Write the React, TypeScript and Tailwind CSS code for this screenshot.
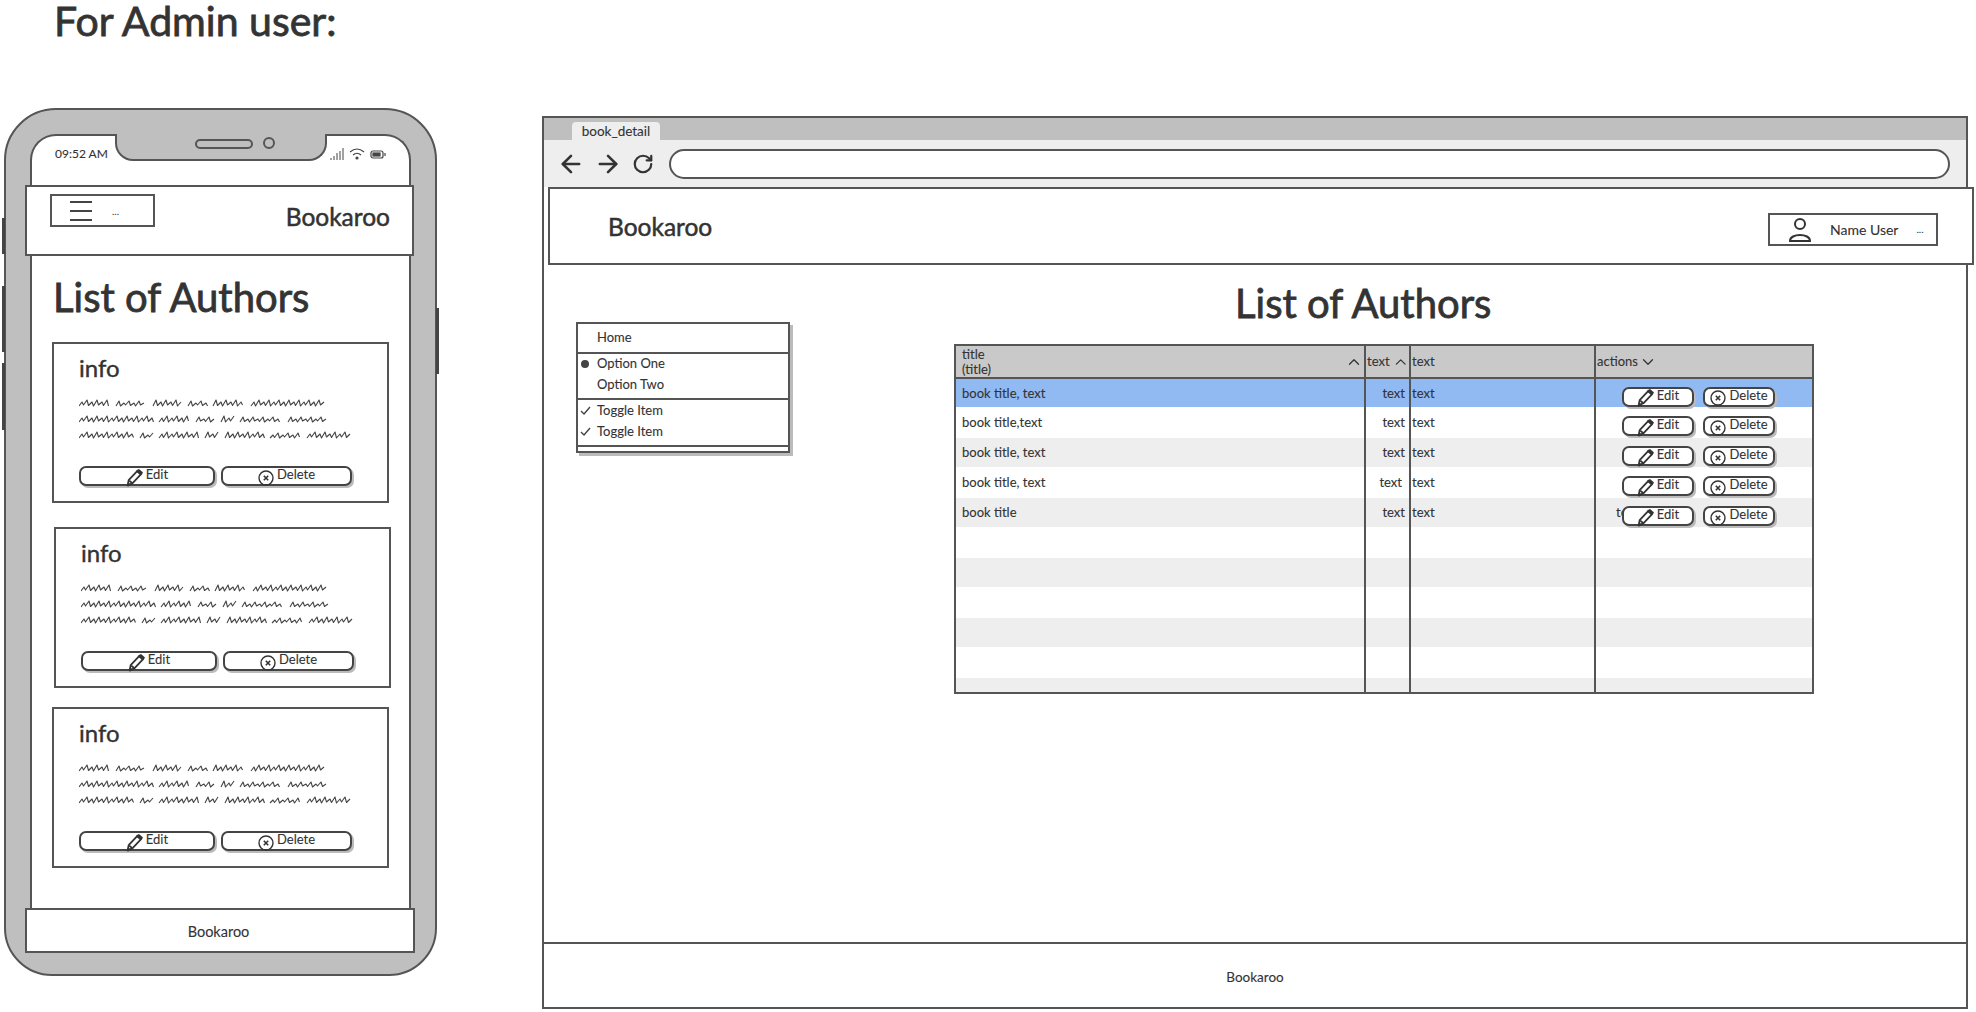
import { ArrowLeft, ArrowRight, ChevronDown, ChevronUp, RotateCw } from "lucide-react";

const scribbleLines = [
  [[0, 31], [37, 66], [74, 103], [109, 130], [134, 164], [172, 245]],
  [[0, 75], [80, 111], [117, 136], [142, 155], [161, 202], [209, 248]],
  [[0, 56], [61, 74], [80, 120], [126, 139], [146, 186], [191, 222], [228, 270]],
];

// the wavy "lorem ipsum" scribble the wireframe uses for body copy
function Scribble() {
  const paths = scribbleLines.map((words, i) =>
    words
      .map(([from, to]) => {
        const base = 10 + i * 16;
        let d = `M${from} ${base}`;
        let n = 0;
        for (let x = from + 2; x <= to; x += 2.5) {
          n++;
          const peak = 3 + ((n * 5 + from) % 4);
          const y = n % 2 === 1 ? base - peak : base - ((n + from) % 3) * 0.5;
          d += ` L${x + (n % 2 === 1 ? 1 : 0)} ${y}`;
        }
        return d;
      })
      .join(" ")
  );
  return (
    <svg width="272" height="46" viewBox="0 0 272 46" fill="none" stroke="#444" strokeWidth="1.1" strokeLinejoin="round">
      {paths.map((d, i) => (
        <path key={i} d={d} />
      ))}
    </svg>
  );
}

function PencilIcon() {
  return (
    <svg className="mt-[3px] shrink-0" width="17" height="18" viewBox="0 0 16 17" fill="none" stroke="#333" strokeWidth="1.7" strokeLinejoin="round">
      <path d="M1.5 15.5 L2.5 10.5 L10.5 2 L14 5 L6 13.5 Z" />
      <path d="M10.5 2 L12 1 L15 3.5 L14 5 L10.5 2 Z" fill="#333" />
      <path d="M3 11 L6 13.5" />
      <path d="M1.5 15.5 L4 14.5" strokeWidth="2" />
    </svg>
  );
}

function DeleteIcon() {
  return (
    <svg className="mt-[3px] shrink-0" width="16" height="16" viewBox="0 0 16 16" fill="none" stroke="#333" strokeWidth="1.4">
      <circle cx="8" cy="8" r="7" />
      <path d="M5.8 5.8 L10.2 10.2 M10.2 5.8 L5.8 10.2" strokeWidth="1.6" />
    </svg>
  );
}

function StatusIcons() {
  return (
    <div className="flex items-center gap-[5px] pt-[12px] pl-[3px]">
      <svg width="14" height="12" viewBox="0 0 14 12" stroke="#444" strokeWidth="1">
        <path d="M1 12V10 M4 12V8 M7 12V5 M10 12V3 M13 12V0" />
      </svg>
      <svg width="16" height="12" viewBox="0 0 16 12" fill="none" stroke="#444" strokeWidth="1.2">
        <path d="M1 4 Q8 -2 15 4" />
        <path d="M4 7 Q8 3.5 12 7" />
        <circle cx="8" cy="10" r="1" fill="#444" />
      </svg>
      <svg width="16" height="9" viewBox="0 0 16 9" fill="none" stroke="#444" strokeWidth="1.2">
        <rect x="1" y="1" width="12" height="7" rx="2" />
        <rect x="3" y="3" width="7" height="3" fill="#444" />
        <path d="M15 3V6" />
      </svg>
    </div>
  );
}

function ActionButtons({ className }: { className: string }) {
  return (
    <div className={className}>
      <button className="relative flex h-[20px] w-[72px] items-center justify-center gap-[3px] rounded-[7px] border-2 border-[#444] bg-white text-[13px] leading-none text-[#333] shadow-[2px_2px_0_#bbb]">
        <PencilIcon />
        <span className="-mt-[3px]">Edit</span>
      </button>
      <button className="relative flex h-[20px] w-[72px] items-center justify-center gap-[3px] rounded-[7px] border-2 border-[#444] bg-white text-[13px] leading-none text-[#333] shadow-[2px_2px_0_#bbb]">
        <DeleteIcon />
        <span className="-mt-[3px]">Delete</span>
      </button>
    </div>
  );
}

const cards = [
  { outer: "ml-[20px] h-[161px]" },
  { outer: "ml-[22px] mt-[24px] h-[161px]" },
  { outer: "ml-[20px] mt-[19px] h-[161px]" },
];

function AuthorCard({ outer }: { outer: string }) {
  return (
    <div className={`w-[337px] border-2 border-[#555] pl-[25px] ${outer}`}>
      <div className="pt-[8px] text-[24px] leading-[32px] text-[#333] [-webkit-text-stroke:0.4px_#333]">info</div>
      <div className="mt-[12px] h-[46px]">
        <Scribble />
      </div>
      <div className="mt-[24px] flex gap-[6px]">
        <button className="flex h-[20px] w-[136px] items-center justify-center gap-[3px] rounded-[7px] border-2 border-[#444] bg-white text-[13px] leading-none text-[#333] shadow-[2px_2px_0_#bbb]">
          <PencilIcon />
          <span className="-mt-[3px]">Edit</span>
        </button>
        <button className="flex h-[20px] w-[131px] items-center justify-center gap-[3px] rounded-[7px] border-2 border-[#444] bg-white text-[13px] leading-none text-[#333] shadow-[2px_2px_0_#bbb]">
          <DeleteIcon />
          <span className="-mt-[3px]">Delete</span>
        </button>
      </div>
    </div>
  );
}

function Phone() {
  return (
    <div className="relative flex h-[868px] w-[433px] shrink-0 flex-col rounded-t-[52px] rounded-b-[48px] border-2 border-[#555] bg-[#bfbfbf] px-[24px] pt-[24px] pb-[21px]">
      <div className="absolute -left-[4px] top-[108px] h-[36px] w-[3px] bg-[#444]" />
      <div className="absolute -left-[4px] top-[176px] h-[66px] w-[3px] bg-[#444]" />
      <div className="absolute -left-[4px] top-[253px] h-[67px] w-[3px] bg-[#444]" />
      <div className="absolute -right-[4px] top-[198px] h-[66px] w-[3px] bg-[#444]" />

      <div className="flex flex-1 flex-col rounded-t-[26px] border-x-2 border-t-2 border-[#555] bg-white">
        <div className="flex h-[49px] items-start">
          <div className="w-[83px] pt-[9px] pl-[23px] text-[12px] leading-[18px] text-[#333]">09:52&nbsp;AM</div>
          <div className="-mt-[2px] flex h-[27px] w-[212px] items-center justify-center gap-[10px] rounded-b-[18px] border-x-2 border-b-2 border-[#555] bg-[#bfbfbf] pb-[6px] pl-[28px]">
            <div className="h-[10px] w-[58px] rounded-full border-2 border-[#555]" />
            <div className="-mt-[2px] h-[12px] w-[12px] rounded-full border-2 border-[#555]" />
          </div>
          <StatusIcons />
        </div>

        <div className="-ml-[7px] -mr-[5px] flex h-[71px] justify-between border-2 border-[#555] bg-white pl-[23px] pr-[22px]">
          <div className="mt-[7px] flex h-[33px] w-[105px] border-2 border-[#555]">
            <div className="mt-[5px] ml-[18px] flex h-[20px] w-[22px] flex-col justify-between">
              <div className="h-[2px] bg-[#444]" />
              <div className="h-[2px] bg-[#444]" />
              <div className="h-[2px] bg-[#444]" />
            </div>
            <div className="mt-[8px] ml-[20px] text-[10px] leading-[14px] text-[#444]">...</div>
          </div>
          <div className="mt-[12px] text-[24.5px] leading-[36px] text-[#333] [-webkit-text-stroke:0.5px_#333]">Bookaroo</div>
        </div>

        <h1 className="mt-[16px] ml-[21px] text-[40px] leading-[50px] text-[#333] [-webkit-text-stroke:0.8px_#333]">List of Authors</h1>

        <div className="mt-[20px] flex flex-col">
          {cards.map((card, i) => (
            <AuthorCard key={i} outer={card.outer} />
          ))}
        </div>

        <div className="-ml-[7px] -mr-[6px] mt-auto flex h-[45px] items-center justify-center border-2 border-[#555] bg-white pt-[2px] pr-[3px] text-[14.5px] text-[#333]">
          Bookaroo
        </div>
      </div>
    </div>
  );
}

function BrowserMenu() {
  return (
    <div className="flex h-[131px] w-[214px] flex-col border-2 border-[#555] bg-white text-[13px] text-[#333] shadow-[3px_3px_0_#bbb]">
      <div className="flex h-[30px] items-center border-b-2 border-[#555] pl-[19px]">Home</div>
      <div className="flex h-[46px] flex-col justify-center gap-[3px] border-b-2 border-[#555] pb-[4px]">
        <div className="relative flex h-[18px] items-center pl-[19px]">
          <span className="absolute left-[3px] top-[5px] h-[8px] w-[8px] rounded-full bg-[#444]" />
          Option One
        </div>
        <div className="flex h-[18px] items-center pl-[19px]">Option Two</div>
      </div>
      <div className="flex h-[47px] flex-col justify-center gap-[3px] border-b-2 border-[#555] pb-[3px]">
        {["a", "b"].map(k => (
          <div key={k} className="relative flex h-[18px] items-center pl-[19px]">
            <svg className="absolute left-[2px] top-[4px]" width="11" height="9" viewBox="0 0 11 9" fill="none" stroke="#444" strokeWidth="1.4">
              <path d="M1 5 L4 8 L10 1" />
            </svg>
            Toggle Item
          </div>
        ))}
      </div>
    </div>
  );
}

const rows = [
  { h: "h-[29px]", bg: "bg-[#91b9f2]", title: "book title, text", num: "text", numCls: "pr-[4px]" },
  { h: "h-[31px]", bg: "bg-white", title: "book title,text", num: "text", numCls: "pr-[4px]" },
  { h: "h-[29px]", bg: "bg-[#eeeeee]", title: "book title, text", num: "text", numCls: "pr-[4px]" },
  { h: "h-[31px]", bg: "bg-white", title: "book title, text", num: "text", numCls: "pr-[7px]" },
  { h: "h-[29px]", bg: "bg-[#eeeeee]", title: "book title", num: "text", numCls: "pr-[4px]", overlap: true },
  { h: "h-[31px]", bg: "bg-white" },
  { h: "h-[29px]", bg: "bg-[#eeeeee]" },
  { h: "h-[31px]", bg: "bg-white" },
  { h: "h-[29px]", bg: "bg-[#eeeeee]" },
  { h: "h-[31px]", bg: "bg-white" },
  { h: "h-[15px]", bg: "bg-[#eeeeee]" },
];

function AuthorsTable() {
  return (
    <table className="w-[858px] table-fixed border-collapse border-2 border-[#555] text-[13px] text-[#333]">
      <colgroup>
        <col className="w-[410px]" />
        <col className="w-[45px]" />
        <col className="w-[185px]" />
        <col className="w-[218px]" />
      </colgroup>
      <thead>
        <tr className="h-[33px] border-b-2 border-[#555] bg-[#c9c9c9] text-left font-normal">
          <th className="border-r-2 border-[#555] pl-[6px] font-normal">
            <div className="flex items-center justify-between pr-[1px] leading-[15px]">
              <span>
                title
                <br />
                (title)
              </span>
              <ChevronUp size={18} strokeWidth={1.7} />
            </div>
          </th>
          <th className="border-r-2 border-[#555] pl-[1px] font-normal">
            <div className="flex items-center gap-[2px]">
              text <ChevronUp size={18} strokeWidth={1.7} />
            </div>
          </th>
          <th className="border-r-2 border-[#555] pl-[1px] font-normal">text</th>
          <th className="pl-[1px] font-normal">
            <div className="flex items-center gap-[1px]">
              actions <ChevronDown size={18} strokeWidth={1.7} />
            </div>
          </th>
        </tr>
      </thead>
      <tbody>
        {rows.map((row, i) => (
          <tr key={i} className={`${row.h} ${row.bg}`}>
            <td className="border-r-2 border-[#555] pl-[6px] leading-none">{row.title}</td>
            <td className={`border-r-2 border-[#555] text-right leading-none ${row.numCls ?? ""}`}>{row.num}</td>
            <td className="border-r-2 border-[#555] pl-[1px] leading-none">{row.num}</td>
            <td className="relative p-0 leading-none">
              {row.title && (
                <div className="flex items-center">
                  {row.overlap && <span className="ml-[20px] w-[6px]">text</span>}
                  <ActionButtons className={`mt-[7px] flex gap-[9px] ${row.overlap ? "ml-0" : "ml-[26px]"}`} />
                </div>
              )}
            </td>
          </tr>
        ))}
      </tbody>
    </table>
  );
}

function Browser() {
  return (
    <div className="mt-[8px] flex h-[893px] w-[1426px] shrink-0 flex-col border-x-2 border-t-2 border-[#555]">
      <div className="flex h-[22px] items-end bg-[#bfbfbf] pl-[28px]">
        <div className="flex h-[18px] w-[88px] items-center justify-center rounded-t-[4px] bg-[#eeeeee] text-[13.5px] text-[#333]">book_detail</div>
      </div>
      <div className="flex h-[47px] items-center bg-[#eeeeee] pl-[13px] pr-[16px]">
        <ArrowLeft size={28} strokeWidth={2.2} className="text-[#333]" />
        <ArrowRight size={28} strokeWidth={2.2} className="ml-[9px] text-[#333]" />
        <RotateCw size={22} strokeWidth={2.4} className="ml-[10px] text-[#333]" />
        <div className="ml-[15px] h-[30px] flex-1 rounded-full border-2 border-[#555] bg-white" />
      </div>
      <div className="-mr-[8px] ml-[4px] flex h-[78px] items-start justify-between border-2 border-[#555] bg-white">
        <div className="mt-[20px] ml-[58px] text-[24.5px] leading-[36px] text-[#333] [-webkit-text-stroke:0.5px_#333]">Bookaroo</div>
        <div className="mt-[24px] mr-[34px] flex h-[33px] w-[170px] items-center border-2 border-[#555] pl-[19px] text-[14px] text-[#333]">
          <svg width="22" height="24" viewBox="0 0 22 24" fill="none" stroke="#333" strokeWidth="2">
            <circle cx="11" cy="6" r="5" />
            <path d="M1 23 C1 15 21 15 21 23 Z" />
          </svg>
          <span className="ml-[19px]">Name User</span>
          <span className="ml-[18px] text-[10px]">...</span>
        </div>
      </div>
      <div className="flex flex-1">
        <div className="ml-[32px] pt-[57px]">
          <BrowserMenu />
        </div>
        <div className="ml-[164px] pt-[13px]">
          <h1 className="ml-[281px] h-[50px] whitespace-nowrap text-[40px] leading-[50px] text-[#333] [-webkit-text-stroke:0.8px_#333]">List of Authors</h1>
          <div className="mt-[16px]">
            <AuthorsTable />
          </div>
        </div>
      </div>
      <div className="-mx-[2px] flex h-[67px] items-center justify-center border-2 border-[#555] bg-white pt-[3px] text-[13.5px] text-[#333]">Bookaroo</div>
    </div>
  );
}

export default function App() {
  return (
    <div className="h-[1012px] w-[1976px] overflow-hidden bg-white font-['Lato',sans-serif] [-webkit-text-stroke:0.1px_#333]">
      <div className="h-[42px] pl-[54px] text-[41px] leading-[42px] text-[#333] [-webkit-text-stroke:0.8px_#333]">For Admin user:</div>
      <div className="mt-[66px] flex items-start pl-[4px]">
        <Phone />
        <div className="ml-[105px]">
          <Browser />
        </div>
      </div>
    </div>
  );
}
